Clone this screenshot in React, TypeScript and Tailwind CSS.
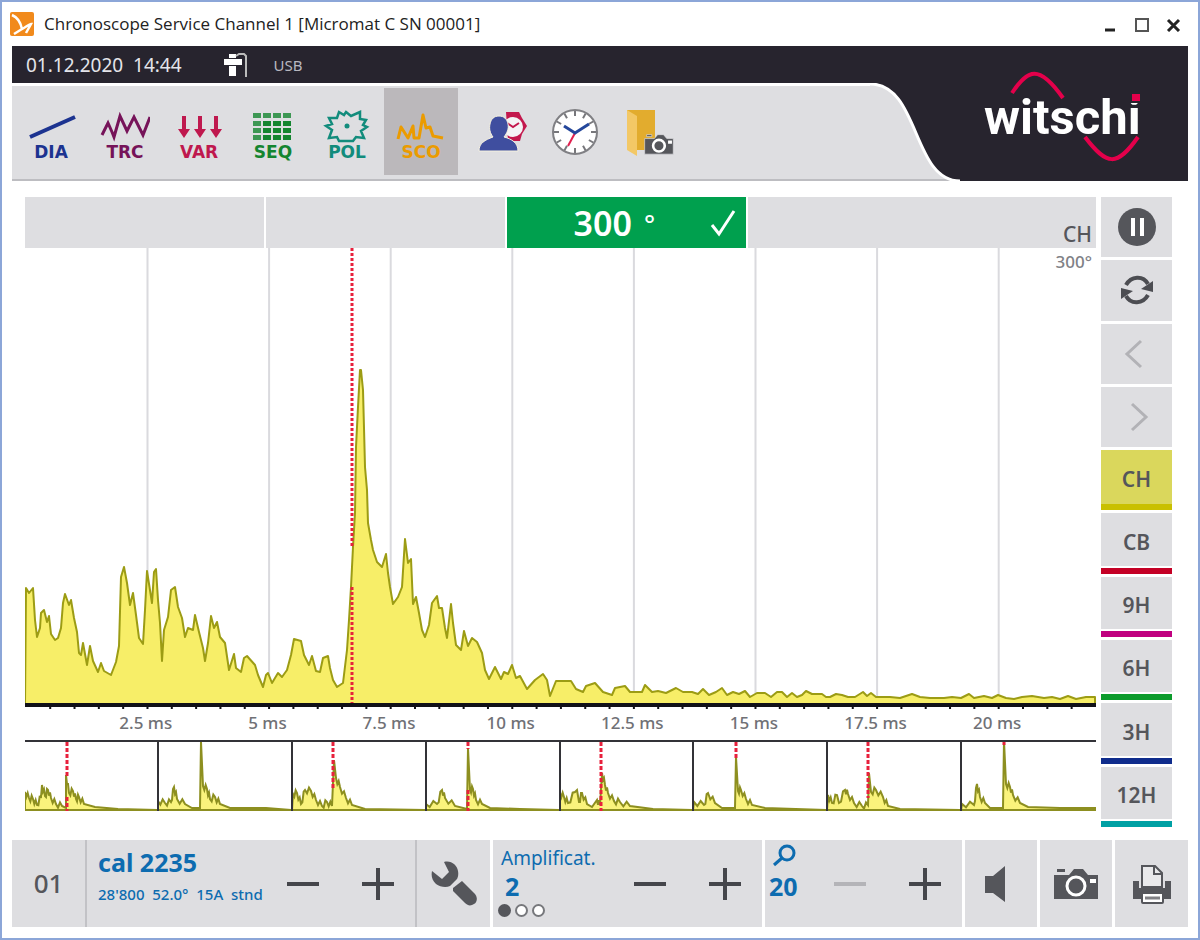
import { useState } from "react";
import type { ReactNode } from "react";
import clsx from "clsx";

const WAVE =
  "25,704 26,588 29,593 33,588 35,620 37,637 40,628 41,613 44,610 47,622 49,616 51,634 55,640 58,638 61,628 63,603 65,594 69,605 71,600 74,618 77,632 79,653 81,655 83,643 87,665 90,646 93,661 98,672 101,663 104,671 111,675 116,662 119,646 121,577 124,567 127,583 130,605 133,593 136,615 139,638 143,644 145,610 147,571 152,603 154,572 156,569 158,600 160,623 162,661 164,630 168,617 171,590 175,587 178,607 182,618 185,637 188,628 193,630 195,615 199,632 203,648 205,661 208,643 211,616 214,628 217,622 220,637 225,643 229,670 234,654 236,668 241,672 244,658 247,656 255,665 258,675 263,687 266,675 268,673 272,683 278,673 282,677 287,670 291,655 294,639 301,641 304,655 309,665 312,656 316,671 320,672 323,658 328,656 330,668 333,680 337,687 343,683 347,650 349,620 351,587 353,547 355,513 356,447 358,407 360,370 361,370 363,390 364,428 365,467 367,490 368,523 371,540 373,550 377,562 382,567 386,554 388,573 390,587 393,604 398,597 402,587 405,539 408,563 411,559 413,604 416,597 419,613 422,630 425,637 429,625 432,603 437,596 439,608 442,608 445,628 447,638 451,604 453,623 456,645 461,650 464,631 468,646 472,638 477,642 482,653 485,670 489,679 495,667 501,679 504,672 508,674 512,665 516,678 520,676 527,689 535,680 543,674 547,680 550,696 556,681 571,681 576,689 583,692 586,686 595,683 603,692 612,695 615,688 625,686 630,692 642,692 645,685 652,692 658,691 666,693 676,688 683,692 692,692 698,694 703,689 709,695 716,692 722,688 727,695 733,692 739,694 745,691 750,697 757,693 765,693 771,697 777,692 782,692 787,697 792,693 797,697 802,695 806,691 812,694 822,694 826,697 830,697 836,694 842,695 848,697 855,697 863,692 867,696 871,693 876,697 890,697 900,698 912,694 920,697 930,698 944,698 952,697 961,698 969,694 974,698 984,696 992,698 998,695 1006,698 1014,699 1022,697 1032,696 1044,698 1052,697 1060,699 1068,696 1076,699 1086,697 1095,697 1095,704";

const OVERVIEW = [
  "25,810 25,792 29,798 33,799 37,805 41,797 42,785 45,796 48,790 51,798 56,804 62,806 66,808 66,775 69,793 73,791 76,799 79,797 84,804 95,807 118,809 157,810",
  "158,810 158,801 165,803 171,802 174,787 177,799 185,804 192,808 200,808 201,742 203,786 207,789 210,799 215,797 220,804 230,808 266,808 291,810",
  "292,810 293,794 297,793 301,804 305,790 311,791 316,800 322,806 327,802 332,806 334,760 336,778 340,787 346,798 352,805 365,809 425,810",
  "426,810 426,804 437,804 442,790 445,798 455,806 467,809 468,748 470,790 473,789 476,800 482,804 490,808 520,809 559,810",
  "560,810 560,793 564,797 568,803 575,792 577,790 579,802 582,793 587,804 592,807 597,800 600,805 602,773 605,785 608,793 614,801 620,802 630,806 653,809 692,810",
  "693,810 694,802 704,805 708,793 715,803 722,808 735,808 736,757 738,791 741,790 746,799 752,805 765,808 826,810",
  "827,810 828,795 832,803 837,795 839,803 845,790 848,794 854,803 862,806 868,805 869,773 871,792 876,790 883,797 888,806 900,809 960,810",
  "961,810 962,804 974,805 977,784 980,797 985,803 990,808 1003,808 1004,741 1006,784 1010,787 1013,795 1020,803 1028,807 1060,808 1095,808 1095,810",
];

const OVERVIEW_MARKS = [
  [67, 742, 776],
  [67, 797, 811],
  [333, 742, 788],
  [468, 742, 749],
  [468, 790, 811],
  [601, 742, 811],
  [736, 742, 758],
  [868, 742, 798],
  [1004, 742, 745],
];

const TIME_LABELS = ["2.5 ms", "5 ms", "7.5 ms", "10 ms", "12.5 ms", "15 ms", "17.5 ms", "20 ms"];

const POSITIONS = [
  { id: "CH", bar: "bg-[#c9c000]" },
  { id: "CB", bar: "bg-[#c40025]" },
  { id: "9H", bar: "bg-[#c0007f]" },
  { id: "6H", bar: "bg-[#0c9b2c]" },
  { id: "3H", bar: "bg-[#0f2c8c]" },
  { id: "12H", bar: "bg-[#00a0a4]" },
];

const MODES: { id: string; color: string; icon: ReactNode }[] = [
  {
    id: "DIA",
    color: "text-[#1c3390]",
    icon: <path d="M4 27 49 7" stroke="currentColor" strokeWidth="4" fill="none" />,
  },
  {
    id: "TRC",
    color: "text-[#761359]",
    icon: (
      <path
        d="M2 25 8 13 12 22l2 5L20 6l7 15 7-14 9 18 7-18"
        stroke="currentColor"
        strokeWidth="3"
        fill="none"
      />
    ),
  },
  {
    id: "VAR",
    color: "text-[#bf184e]",
    icon: (
      <g fill="currentColor">
        {[10, 26, 42].map((x) => (
          <path key={x} d={`M${x - 2} 6h4v13h4l-6 9-6-9h4z`} />
        ))}
      </g>
    ),
  },
  {
    id: "SEQ",
    color: "text-[#14852f]",
    icon: (
      <g fill="currentColor">
        {[3, 11, 18, 25].map((y, row) =>
          [5, 15, 25, 35].map((x, col) => (
            <rect key={`${x}-${y}`} x={x} y={y} width="8" height="5" opacity={row === 0 || col === 0 ? 0.8 : 1} />
          ))
        )}
      </g>
    ),
  },
  {
    id: "POL",
    color: "text-[#128c7c]",
    icon: (
      <>
        <path
          d="M24 2 29 6 38 2 38 9 44 10 41 15 45 17 39 21 42 28 34 27 31 31 24 31 17 31 15 27 7 28 10 20 4 16 10 14 7 8 15 8 17 2 22 5z"
          stroke="currentColor"
          strokeWidth="2.5"
          fill="none"
        />
        <circle cx="25" cy="16" r="2.5" fill="currentColor" />
      </>
    ),
  },
  {
    id: "SCO",
    color: "text-[#eb9b00]",
    icon: (
      <path
        d="M2 29 5 17l7 11 5-12 1 12h5L27 5l3 13 4-1 3 9 10 2"
        stroke="currentColor"
        strokeWidth="3"
        strokeLinejoin="round"
        fill="none"
      />
    ),
  },
];

// adds a small zigzag between the samples so the short traces look like noise
function roughen(points: string) {
  const pts = points.split(" ").map((p) => p.split(",").map(Number));
  const out: string[] = [];
  pts.forEach(([x, y], i) => {
    out.push(`${x},${y}`);
    const next = pts[i + 1];
    if (!next || next[0] - x < 3 || y > 806 || next[1] > 806) return;
    const dx = (next[0] - x) / 3;
    const dy = (next[1] - y) / 3;
    out.push(`${x + dx},${y + dy + 3}`, `${x + 2 * dx},${y + 2 * dy - 3}`);
  });
  return out.join(" ");
}

function AppIcon() {
  return (
    <svg viewBox="0 0 24 24" className="size-6 shrink-0" aria-hidden="true">
      <rect width="24" height="24" rx="2" fill="#f18a1c" />
      <path d="M2 3c7 3 9 9 10 14L4 22M12 17c3-1 7-5 9-5l-5 9" fill="none" stroke="#fff" strokeWidth="2.5" />
    </svg>
  );
}

function BrandLogo() {
  return (
    <svg viewBox="0 0 170 96" className="h-24 w-[170px]" role="img" aria-label="witschi">
      <path d="M31 25C47 1 58-4 82 30" fill="none" stroke="#e4004b" strokeWidth="4" />
      <path d="M104 69c22 29 32 30 53 0" fill="none" stroke="#e4004b" strokeWidth="4" />
      <text x="3" y="66" fill="#fff" fontSize="49" fontWeight="700" fontFamily="Roboto, 'Liberation Sans', sans-serif">
        witschi
      </text>
      <rect x="149" y="25" width="12" height="10" fill="#27242e" />
      <rect x="151" y="26" width="8" height="7" fill="#e4004b" />
    </svg>
  );
}

function CameraIcon({ className }: { className?: string }) {
  return (
    <svg viewBox="0 0 46 32" className={className} aria-hidden="true">
      <path d="M4 1h8v3H4zM1 7h15l5-6h9l5 6h10v24H1z" fill="#55565b" />
      <circle cx="23" cy="18" r="9" fill="#55565b" stroke="#fff" strokeWidth="3" />
      <circle cx="23" cy="18" r="5" fill="#55565b" />
      <rect x="37" y="11" width="6" height="4" fill="#fff" />
    </svg>
  );
}

function UserWatchIcon() {
  return (
    <svg viewBox="0 0 50 44" className="h-11 w-[50px]" aria-hidden="true">
      <path d="M28 2h13l3 6 5 8-5 8-2 7H30z" fill="#c3184d" />
      <circle cx="35" cy="17" r="10" fill="#f4f4f5" />
      <path d="M29 13l6 4 6-4" fill="none" stroke="#c3184d" strokeWidth="2" />
      <path
        d="M1 41c0-8 6-11 14-14-3-4-4-8-3-13 1-5 4-8 9-8s8 3 9 8c1 5-1 9-4 13 8 2 14 6 14 14z"
        fill="#3f4e9f"
        stroke="#f6f2e0"
      />
    </svg>
  );
}

function ClockIcon() {
  const ticks = Array.from({ length: 12 }, (_, i) => i * 30);
  return (
    <svg viewBox="0 0 48 48" className="size-12" aria-hidden="true">
      <circle cx="24" cy="24" r="22" fill="#fff" stroke="#808084" strokeWidth="2" />
      {ticks.map((a) => (
        <path key={a} d="M24 3v5" stroke="#77777b" strokeWidth="2" transform={`rotate(${a} 24 24)`} />
      ))}
      <path d="M24 25 17 38" stroke="#e0204f" strokeWidth="2" />
      <path d="M13 18l11 7 14-9" fill="none" stroke="#24479b" strokeWidth="3" />
    </svg>
  );
}

function FolderCameraIcon() {
  return (
    <svg viewBox="0 0 50 48" className="h-12 w-[50px]" aria-hidden="true">
      <path d="M2 2h28v40H2z" fill="#e2ac2e" />
      <path d="M2 2 12 8v40L2 42z" fill="#f3c866" />
      <g transform="translate(19 26) scale(.65)">
        <path d="M4 1h8v3H4zM1 7h15l5-6h9l5 6h10v24H1z" fill="#55565b" stroke="#dedee1" />
        <circle cx="23" cy="18" r="9" fill="#55565b" stroke="#fff" strokeWidth="4" />
        <rect x="37" y="10" width="6" height="5" fill="#fff" />
      </g>
    </svg>
  );
}

function PlusMinus({ minus, disabled }: { minus?: boolean; disabled?: boolean }) {
  return (
    <button
      type="button"
      disabled={disabled}
      aria-label={minus ? "Decrease" : "Increase"}
      className={clsx(
        "flex h-full w-[75px] shrink-0 items-center justify-center",
        disabled ? "text-[#b4b4b8]" : "text-[#45464b]"
      )}
    >
      <svg viewBox="0 0 32 32" className="size-8" aria-hidden="true">
        <path d={minus ? "M0 16h32" : "M0 16h32M16 0v32"} stroke="currentColor" strokeWidth="4" />
      </svg>
    </button>
  );
}

function SideButton({ label, children }: { label: string; children: ReactNode }) {
  return (
    <button type="button" aria-label={label} className="flex flex-1 items-center justify-center bg-[#dedee1]">
      {children}
    </button>
  );
}

function TitleBar() {
  return (
    <div className="flex h-11 items-center bg-white pr-4 pl-2">
      <AppIcon />
      <h1 className="ml-[10px] flex-1 font-['Open_Sans',sans-serif] text-[17px] leading-6 text-[#222]">
        Chronoscope Service Channel 1 [Micromat C SN 00001]
      </h1>
      <div className="flex items-center gap-4 text-[#222]">
        <button type="button" aria-label="Minimize">
          <svg viewBox="0 0 16 16" className="size-4">
            <path d="M3 14h10" stroke="currentColor" strokeWidth="3" />
          </svg>
        </button>
        <button type="button" aria-label="Maximize">
          <svg viewBox="0 0 16 16" className="size-4">
            <rect x="2" y="3" width="12" height="12" fill="none" stroke="#555" strokeWidth="2" />
          </svg>
        </button>
        <button type="button" aria-label="Close">
          <svg viewBox="0 0 16 16" className="size-4">
            <path d="M2 4l11 11M13 4 2 15" stroke="currentColor" strokeWidth="3" />
          </svg>
        </button>
      </div>
    </div>
  );
}

function Header({ mode, onMode }: { mode: string; onMode: (m: string) => void }) {
  return (
    <header className="mx-[10px] flex h-[135px] bg-[#27242e]">
      <div className="flex flex-1 flex-col">
        <div className="flex h-[37px] items-center pl-[14px] text-[#e4e4ea]">
          <time className="text-[19px] leading-6 whitespace-pre">01.12.2020  14:44</time>
          <svg viewBox="0 0 26 26" className="ml-10 size-[26px]" aria-hidden="true">
            <path d="M7 2h7v4h-7zM2 7h18v6H2zM7 14h7v10H7z" fill="#fff" />
            <path d="M14 4l3-2h5l2 2v21" fill="none" stroke="#bbb" strokeWidth="2" />
          </svg>
          <span className="ml-[26px] text-[15px] leading-5 text-[#b8b8c0]">USB</span>
        </div>
        <nav className="flex flex-1 border-t-3 border-b-2 border-t-white border-b-[#bdbdc1] bg-[#dedee1] pt-0.5 pl-0.5">
          {MODES.map((m) => (
            <button
              key={m.id}
              type="button"
              onClick={() => onMode(m.id)}
              className={clsx(
                "flex h-[87px] w-[74px] flex-col items-center pt-[22px]",
                m.color,
                mode === m.id && "bg-[#bbb8bb]"
              )}
            >
              <svg viewBox="0 0 50 34" className="h-[34px] w-[50px]" aria-hidden="true">
                {m.icon}
              </svg>
              <span className="font-['DejaVu_Sans',sans-serif] text-[17px] leading-4 font-bold">{m.id}</span>
            </button>
          ))}
          <div className="ml-2 flex h-[87px] items-center">
            <button type="button" aria-label="Operator" className="flex w-[74px] justify-center">
              <UserWatchIcon />
            </button>
            <button type="button" aria-label="Clock" className="flex w-[70px] justify-center">
              <ClockIcon />
            </button>
            <button type="button" aria-label="Screenshots" className="flex w-20 justify-center">
              <FolderCameraIcon />
            </button>
          </div>
        </nav>
      </div>
      <svg viewBox="0 0 90 98" className="h-[98px] w-[90px] self-end" aria-hidden="true">
        <path d="M0 0C50 0 42 98 90 98H0z" fill="#dedee1" />
        <path d="M0 97h80" stroke="#bdbdc1" strokeWidth="2" />
        <path d="M0 1C50 1 42 98 90 98" fill="none" stroke="#fff" strokeWidth="3" />
      </svg>
      <div className="w-[228px] pt-[22px] pl-[21px]">
        <BrandLogo />
      </div>
    </header>
  );
}

function ScopeChart() {
  const ticks = Array.from({ length: 43 }, (_, i) => 50.2 + i * 24.32);
  return (
    <section className="flex min-w-0 flex-1 flex-col">
      <div className="grid h-[51px] grid-cols-[239fr_239fr_239fr_348fr] gap-0.5">
        <div className="bg-[#dedee1]" />
        <div className="bg-[#dedee1]" />
        <div className="flex items-center justify-end bg-[#00a04e] pr-[9px] text-white">
          <span className="text-[34px] leading-9 font-semibold">300</span>
          <span className="mr-[54px] ml-3 text-[26px] leading-9 font-medium">°</span>
          <svg viewBox="0 0 28 28" className="size-7" aria-label="OK">
            <path d="M3 16l7 9L25 2" fill="none" stroke="currentColor" strokeWidth="3" />
          </svg>
        </div>
        <div className="flex items-end justify-end bg-[#dedee1] pr-1 text-[21px] leading-7 font-medium text-[#55565b]">
          CH
        </div>
      </div>
      <div className="relative">
        <svg viewBox="25 248 1071 461" preserveAspectRatio="none" className="block h-[461px] w-full">
          {TIME_LABELS.map((t, i) => (
            <path key={t} d={`M${147.5 + i * 121.6} 248V704`} stroke="#dadade" strokeWidth="2" />
          ))}
          <polygon points={WAVE} fill="#f7ee68" />
          <polyline points={WAVE} fill="none" stroke="#9c9c14" strokeWidth="2" strokeLinejoin="round" />
          <path d="M352 248V546M352 587V704" stroke="#e8203c" strokeWidth="3" strokeDasharray="3 2" />
          <path d="M25 705H1096" stroke="#111118" strokeWidth="4" />
          {ticks.map((x) => (
            <path key={x} d={`M${x} 705v4`} stroke="#111118" strokeWidth="2" />
          ))}
        </svg>
        <span className="absolute top-0.5 right-1 text-[17px] leading-6 font-medium text-[#808186]">300°</span>
      </div>
      <div className="ml-[5.6%] flex h-[30px] pt-0.5">
        {TIME_LABELS.map((t) => (
          <span
            key={t}
            className="w-[12.03%] shrink-0 text-center text-[17px] leading-6 font-medium text-[#707176]"
          >
            {t}
          </span>
        ))}
      </div>
      <svg viewBox="25 739 1071 73" preserveAspectRatio="none" className="block h-[73px] w-full">
        {OVERVIEW.map((points) => (
          <polygon key={points} points={roughen(points)} fill="#faf37c" stroke="#8d8f20" strokeWidth="2" />
        ))}
        <path d="M25 741H1096" stroke="#333338" strokeWidth="2" />
        {[158, 292, 426, 560, 693, 827, 961].map((x) => (
          <path key={x} d={`M${x} 741V811`} stroke="#333338" strokeWidth="2" />
        ))}
        {OVERVIEW_MARKS.map(([x, y1, y2]) => (
          <path key={`${x}-${y1}`} d={`M${x} ${y1}V${y2}`} stroke="#e8203c" strokeWidth="3" strokeDasharray="4 2" />
        ))}
      </svg>
    </section>
  );
}

function SidePanel({ position, onPosition }: { position: string; onPosition: (p: string) => void }) {
  return (
    <aside className="flex h-[630px] w-[71px] shrink-0 flex-col gap-[3px]">
      <SideButton label="Pause">
        <svg viewBox="0 0 38 38" className="size-[38px]">
          <circle cx="19" cy="19" r="19" fill="#55565b" />
          <path d="M15 10v18M24 10v18" stroke="#fff" strokeWidth="4" />
        </svg>
      </SideButton>
      <SideButton label="Repeat">
        <svg viewBox="0 0 34 30" className="h-[30px] w-[34px]" fill="none" stroke="#4c4d52" strokeWidth="4">
          <path d="M6 10C11 1 23 0 28 9M28 20C23 29 11 30 6 21" />
          <path d="M33 6v11l-12-3zM1 24V13l12 3z" fill="#4c4d52" stroke="none" />
        </svg>
      </SideButton>
      <SideButton label="Previous">
        <svg viewBox="0 0 32 30" className="h-[30px] w-8">
          <path d="M20 2 6 15l14 13" fill="none" stroke="#b2b2b6" strokeWidth="3" />
        </svg>
      </SideButton>
      <SideButton label="Next">
        <svg viewBox="0 0 32 30" className="h-[30px] w-8">
          <path d="M11 2l14 13-14 13" fill="none" stroke="#b2b2b6" strokeWidth="3" />
        </svg>
      </SideButton>
      {POSITIONS.map(({ id, bar }) => (
        <button
          key={id}
          type="button"
          onClick={() => onPosition(id)}
          className="flex flex-1 flex-col text-[21px] leading-6 font-semibold text-[#55565b]"
        >
          <span
            className={clsx(
              "flex w-full flex-1 items-center justify-center pt-1",
              position === id ? "bg-[#dad75c]" : "mb-0.5 bg-[#dedee1]"
            )}
          >
            {id}
          </span>
          <span className={clsx("h-[6px] w-full", bar)} />
        </button>
      ))}
    </aside>
  );
}

function Footer() {
  return (
    <footer className="mx-[10px] flex h-[87px] gap-[3px] text-[#0d6cb0]">
      <div className="flex min-w-0 flex-1 bg-[#dedee1]">
        <div className="flex w-[75px] shrink-0 items-center justify-center border-r-2 border-[#c2c2c6] text-[26px] font-medium text-[#55565b]">
          01
        </div>
        <div className="flex min-w-0 flex-1 border-r-2 border-[#c2c2c6]">
          <div className="min-w-0 flex-1 pt-[6px] pl-[11px]">
            <p className="text-[25px] leading-8 font-bold">cal 2235</p>
            <p className="text-[15px] leading-8 font-medium whitespace-pre">28'800  52.0°  15A  stnd</p>
          </div>
          <PlusMinus minus />
          <PlusMinus />
        </div>
        <button type="button" aria-label="Settings" className="flex w-[73px] shrink-0 items-center justify-center">
          <svg viewBox="0 0 46 46" className="size-[46px]" fill="#55565b">
            <path d="M13 1c7-2 13 3 14 9 1 5-1 8-1 8l-7 7c-4 2-10 1-14-2-4-4-5-8-4-13l10 8 7-7z" />
            <path d="M22 27l9-7 13 13c3 4 2 8-1 10s-6 2-9-1L22 30z" />
          </svg>
        </button>
      </div>
      <div className="flex w-[269px] shrink-0 bg-[#dedee1]">
        <div className="flex-1 pt-1 pl-[5px]">
          <p className="pl-[3px] text-[19px] leading-7">Amplificat.</p>
          <p className="pl-[7px] text-[25px] leading-7 font-bold">2</p>
          <div className="flex gap-1 pt-1">
            <span className="size-[13px] rounded-full bg-[#55565b]" />
            <span className="size-[13px] rounded-full border-2 border-[#77787c] bg-white" />
            <span className="size-[13px] rounded-full border-2 border-[#77787c] bg-white" />
          </div>
        </div>
        <PlusMinus minus />
        <PlusMinus />
      </div>
      <div className="flex w-[197px] shrink-0 bg-[#dedee1]">
        <div className="flex-1 pt-1 pl-1">
          <svg viewBox="0 0 24 24" className="ml-1 size-6" fill="none" stroke="currentColor" strokeWidth="3">
            <circle cx="14" cy="9" r="7" />
            <path d="M9 14l-8 7" />
          </svg>
          <p className="pt-1 text-[25px] leading-7 font-bold">20</p>
        </div>
        <PlusMinus minus disabled />
        <PlusMinus />
      </div>
      <button
        type="button"
        aria-label="Sound"
        className="flex w-[72px] shrink-0 items-center justify-center bg-[#dedee1]"
      >
        <svg viewBox="0 0 24 36" className="mr-3 h-9 w-6" fill="#55565b">
          <path d="M2 10h8L22 0v36L10 27H2z" />
        </svg>
      </button>
      <button
        type="button"
        aria-label="Screenshot"
        className="flex w-[72px] shrink-0 items-center justify-center bg-[#dedee1]"
      >
        <CameraIcon className="h-8 w-[46px]" />
      </button>
      <button
        type="button"
        aria-label="Print"
        className="flex w-[73px] shrink-0 items-center justify-center bg-[#dedee1]"
      >
        <svg viewBox="0 0 40 40" className="size-10">
          <path d="M1 17h6v7h26v-7h6v18H1z" fill="#55565b" />
          <path d="M10 2h13l7 7v14H10z" fill="#e9e9eb" stroke="#55565b" strokeWidth="2" />
          <path d="M22 2v8h8" fill="none" stroke="#55565b" strokeWidth="2" />
          <rect x="10" y="29" width="21" height="10" rx="1" fill="#fff" stroke="#55565b" strokeWidth="2" />
          <path d="M13 34h15" stroke="#808084" strokeWidth="3" />
        </svg>
      </button>
    </footer>
  );
}

export default function App() {
  const [mode, setMode] = useState("SCO");
  const [position, setPosition] = useState("CH");

  return (
    <div className="min-h-screen border-2 border-[#8ca6d8] bg-white pb-[11px] font-['Noto_Sans',sans-serif]">
      <TitleBar />
      <Header mode={mode} onMode={setMode} />
      <main className="mt-4 mb-[13px] flex gap-[5px] pr-[26px] pl-[23px]">
        <ScopeChart />
        <SidePanel position={position} onPosition={setPosition} />
      </main>
      <Footer />
    </div>
  );
}
